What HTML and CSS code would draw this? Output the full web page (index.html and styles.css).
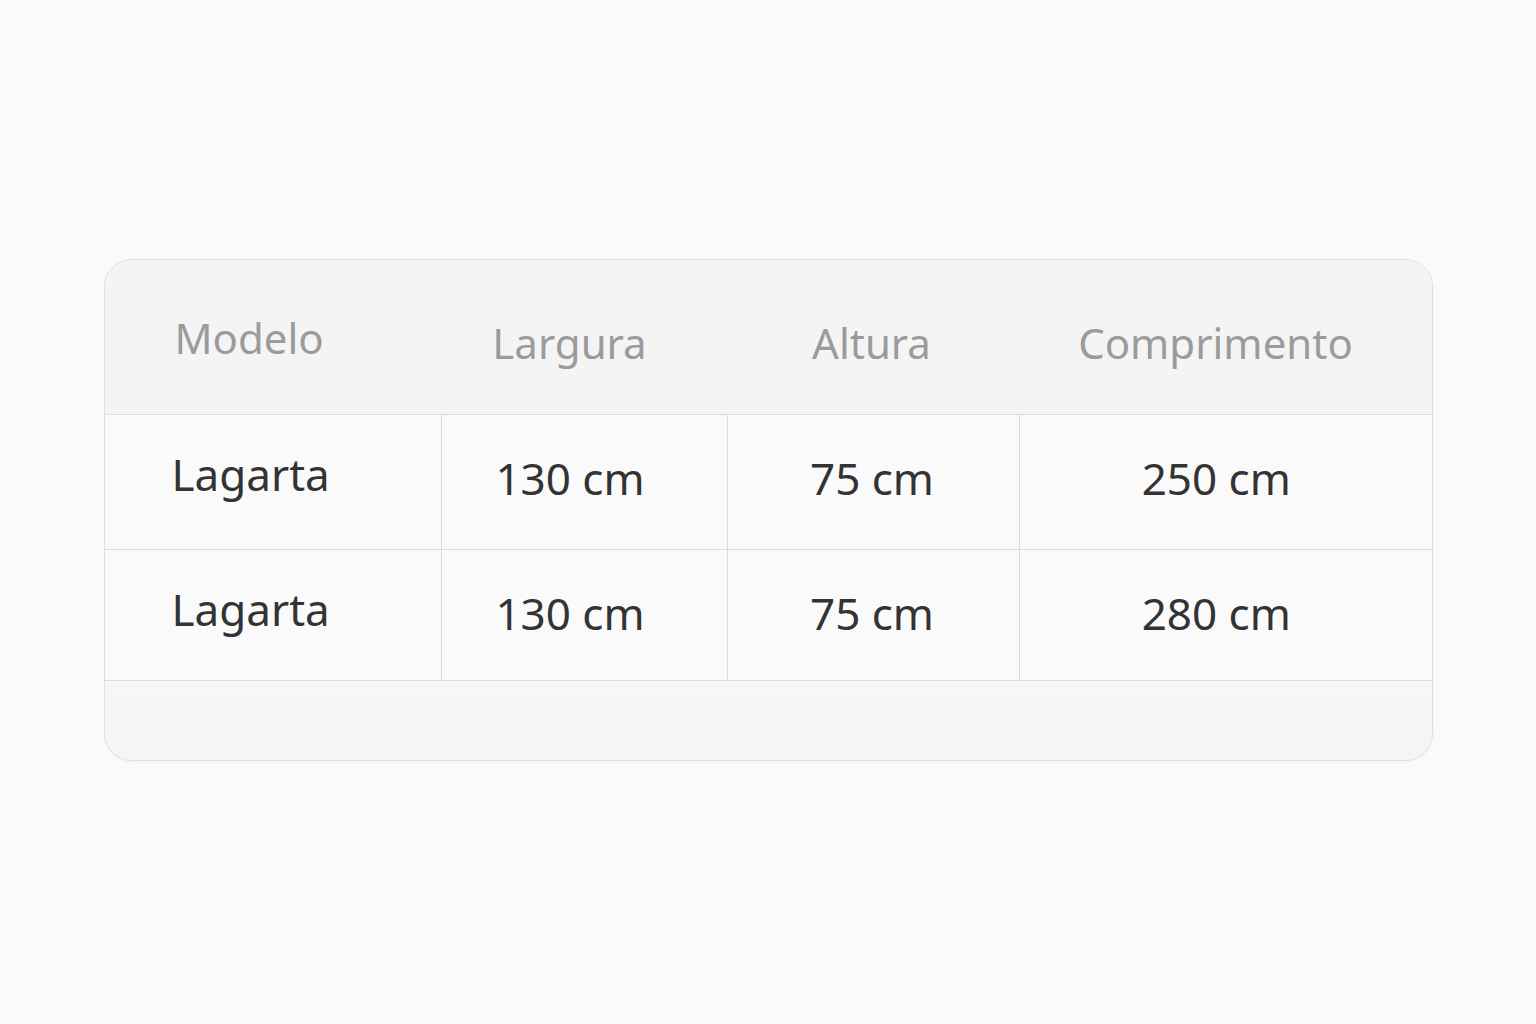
FILE: index.html
```html
<!DOCTYPE html>
<html lang="pt">
<head>
<meta charset="utf-8">
<title>Tabela</title>
<link rel="stylesheet" href="styles.css">
</head>
<body>
<main class="page">
  <div class="card">
    <table class="spec">
      <colgroup>
        <col class="c1"><col class="c2"><col class="c3"><col class="c4">
      </colgroup>
      <thead>
        <tr>
          <th class="col-model">Modelo</th>
          <th class="col-w">Largura</th>
          <th class="col-h">Altura</th>
          <th class="col-l">Comprimento</th>
        </tr>
      </thead>
      <tbody>
        <tr class="r1">
          <td class="col-model">Lagarta</td>
          <td class="col-w">130 cm</td>
          <td class="col-h">75 cm</td>
          <td class="col-l">250 cm</td>
        </tr>
        <tr class="r2">
          <td class="col-model">Lagarta</td>
          <td class="col-w">130 cm</td>
          <td class="col-h">75 cm</td>
          <td class="col-l">280 cm</td>
        </tr>
      </tbody>
    </table>
    <div class="card-foot"></div>
  </div>
</main>
</body>
</html>
```

FILE: styles.css
```css
html, body {
  margin: 0;
  padding: 0;
  background: #fbf9fb;
}
body {
  font-family: "Noto Sans", "Open Sans", sans-serif;
}
.page {
  padding-top: 259px;
  height: 1024px;
  box-sizing: border-box;
}
.card {
  width: 1329px;
  margin: 0 auto;
  box-sizing: border-box;
  border: 1px solid #dfdddf;
  border-radius: 28px;
  overflow: hidden;
  background: #f8f7f8;
  box-shadow: 0 1px 3px rgba(0,0,0,0.04);
}
.spec {
  width: 100%;
  border-collapse: collapse;
  table-layout: fixed;
}
.c1 { width: 337px; }
.c2 { width: 286px; }
.c3 { width: 292px; }
.c4 { width: auto; }

.spec th {
  height: 144px;
  padding: 10px 0 0 0;
  background: #f5f4f5;
  color: #9c9b9c;
  font-weight: 400;
  font-size: 42px;
  text-align: center;
  border-bottom: 1px solid #dddcdd;
}
.spec th.col-model {
  height: 154px;
  padding: 0 0 0 70px;
  text-align: left;
}

.spec td {
  background: #fafafa;
  color: #333333;
  font-size: 44px;
  text-align: center;
  border-bottom: 1px solid #dddcdd;
  border-left: 1px solid #dddcdd;
}
.spec td.col-model {
  border-left: none;
  text-align: left;
  padding-left: 67px;
}

.spec tr.r1 td { height: 126px; padding-top: 0; padding-bottom: 8px; }
.spec tr.r1 td.col-model { height: 118px; padding-bottom: 16px; }
.spec tr.r2 td { height: 126px; padding-top: 0; padding-bottom: 4px; }
.spec tr.r2 td.col-model { height: 118px; padding-bottom: 12px; }

.spec .col-w { padding-right: 30px; }
.spec .col-h { padding-right: 4px; }
.spec .col-l { padding-right: 20px; }

.card-foot {
  height: 79px;
  background: linear-gradient(#f8f7f8, #f6f5f6);
}
```
